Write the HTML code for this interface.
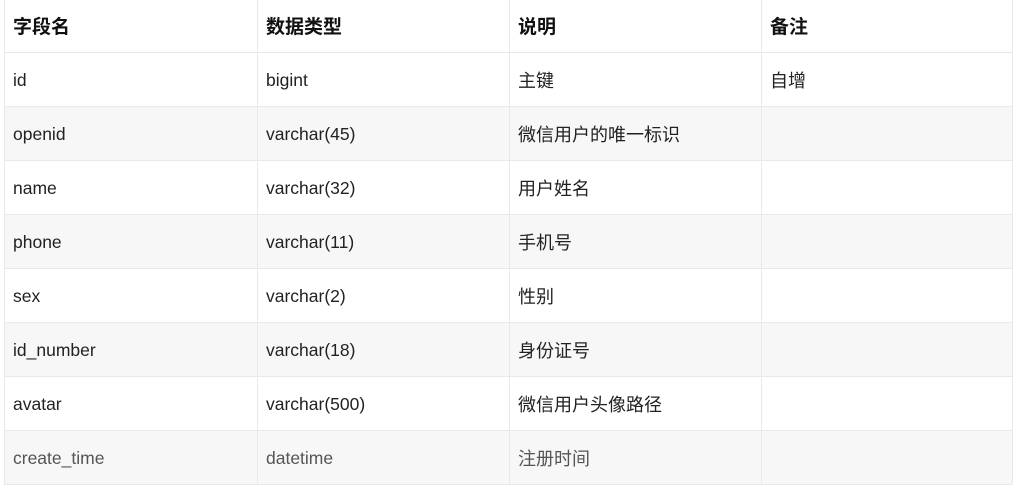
<!DOCTYPE html>
<html><head><meta charset="utf-8"><style>
body{margin:0;background:#fff;width:1024px;height:491px;overflow:hidden;font-family:"Liberation Sans","Noto Sans CJK SC",sans-serif;}
table{position:absolute;left:4px;top:-1px;border-collapse:collapse;table-layout:fixed;}
td,th{border:1px solid #e8e9eb;height:54px;padding:0 0 0 8px;text-align:left;font-size:17.5px;line-height:20px;color:#222;box-sizing:border-box;vertical-align:middle;}
th{font-weight:bold;font-size:19px;color:#111;height:54px;}
tr.h th{height:53px;}
.c{font-family:"Noto Sans CJK SC",sans-serif;font-size:18px;line-height:20px;}
tr:nth-child(odd) td{background:#f7f7f8;}
tr.last td{color:#555;}
</style></head><body>
<table>
<colgroup><col style="width:253px"><col style="width:252px"><col style="width:252px"><col style="width:251px"></colgroup>
<tr class="h"><th class="c" style="font-size:19px">字段名</th><th class="c" style="font-size:19px">数据类型</th><th class="c" style="font-size:19px">说明</th><th class="c" style="font-size:19px">备注</th></tr>
<tr><td>id</td><td>bigint</td><td class="c">主键</td><td class="c">自增</td></tr>
<tr><td>openid</td><td>varchar(45)</td><td class="c">微信用户的唯一标识</td><td></td></tr>
<tr><td>name</td><td>varchar(32)</td><td class="c">用户姓名</td><td></td></tr>
<tr><td>phone</td><td>varchar(11)</td><td class="c">手机号</td><td></td></tr>
<tr><td>sex</td><td>varchar(2)</td><td class="c">性别</td><td></td></tr>
<tr><td>id_number</td><td>varchar(18)</td><td class="c">身份证号</td><td></td></tr>
<tr><td>avatar</td><td>varchar(500)</td><td class="c">微信用户头像路径</td><td></td></tr>
<tr class="last"><td>create_time</td><td>datetime</td><td class="c">注册时间</td><td></td></tr>
</table>
</body></html>
